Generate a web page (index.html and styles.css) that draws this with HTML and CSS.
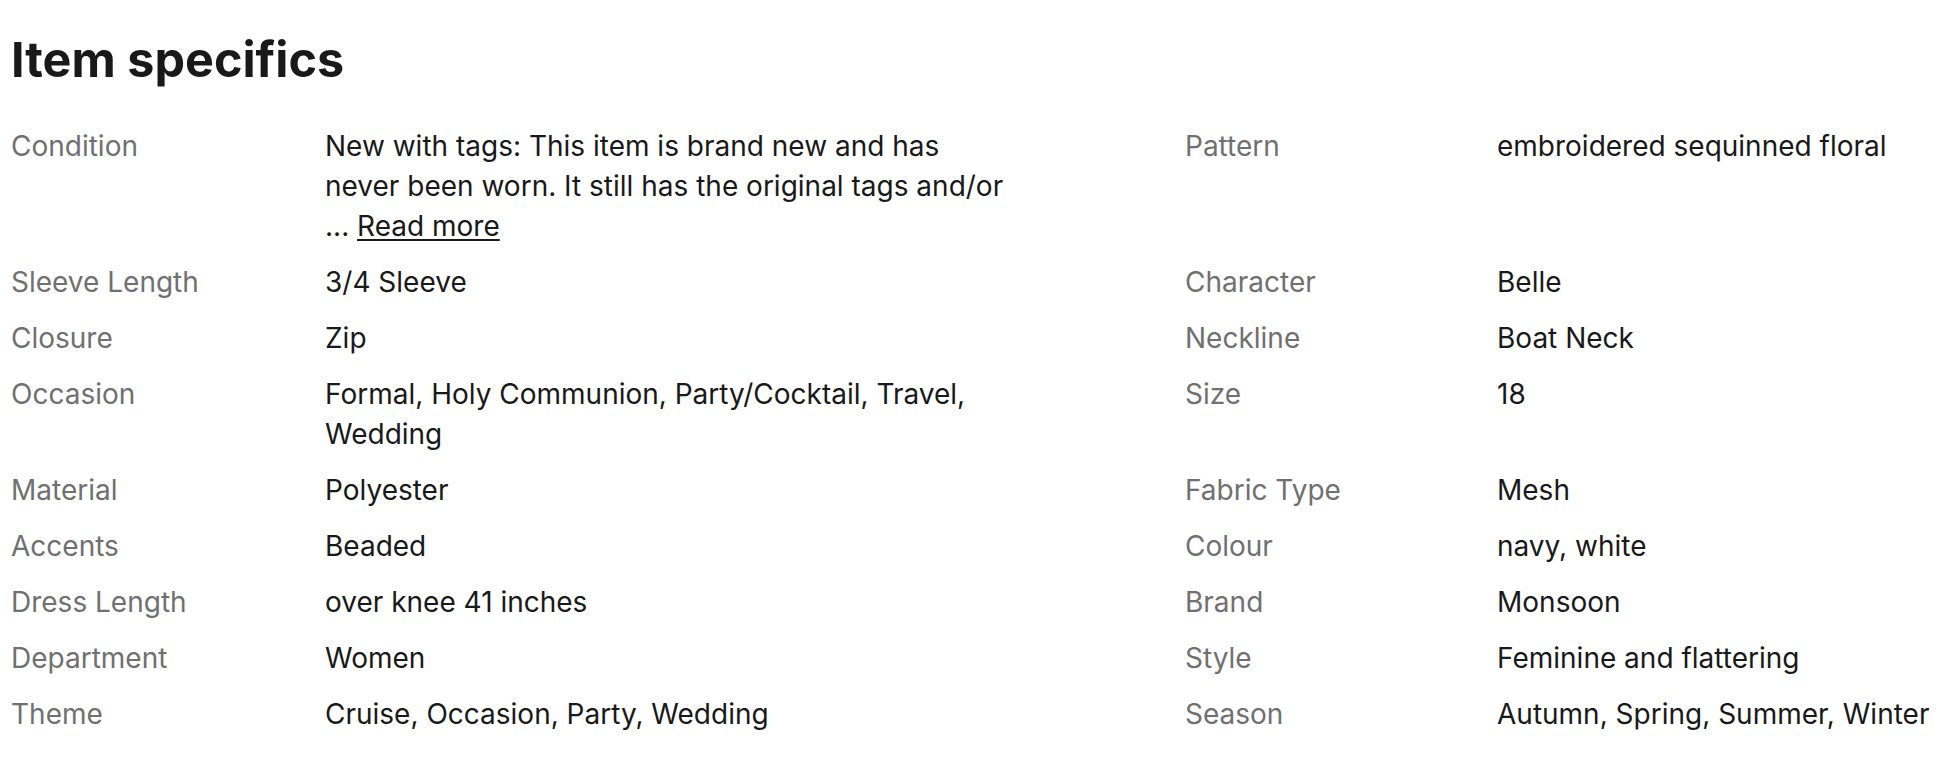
FILE: index.html
```html
<!DOCTYPE html>
<html lang="en">
<head>
<meta charset="utf-8">
<title>Item specifics</title>
<link rel="stylesheet" href="styles.css">
</head>
<body>
<section class="specs">
  <h2 class="specs-title">Item specifics</h2>
  <div class="specs-rows">
    <div class="row">
      <div class="col col-left">
        <div class="label">Condition</div>
        <div class="value">New with tags: This item is brand new and has never been worn. It still has the original tags and/or ... <a class="more" href="#">Read more</a></div>
      </div>
      <div class="col col-right">
        <div class="label">Pattern</div>
        <div class="value">embroidered sequinned floral</div>
      </div>
    </div>
    <div class="row">
      <div class="col col-left"><div class="label">Sleeve Length</div><div class="value">3/4 Sleeve</div></div>
      <div class="col col-right"><div class="label">Character</div><div class="value">Belle</div></div>
    </div>
    <div class="row">
      <div class="col col-left"><div class="label">Closure</div><div class="value">Zip</div></div>
      <div class="col col-right"><div class="label">Neckline</div><div class="value">Boat Neck</div></div>
    </div>
    <div class="row">
      <div class="col col-left"><div class="label">Occasion</div><div class="value">Formal, Holy Communion, Party/Cocktail, Travel, Wedding</div></div>
      <div class="col col-right"><div class="label">Size</div><div class="value">18</div></div>
    </div>
    <div class="row">
      <div class="col col-left"><div class="label">Material</div><div class="value">Polyester</div></div>
      <div class="col col-right"><div class="label">Fabric Type</div><div class="value">Mesh</div></div>
    </div>
    <div class="row">
      <div class="col col-left"><div class="label">Accents</div><div class="value">Beaded</div></div>
      <div class="col col-right"><div class="label">Colour</div><div class="value">navy, white</div></div>
    </div>
    <div class="row">
      <div class="col col-left"><div class="label">Dress Length</div><div class="value">over knee 41 inches</div></div>
      <div class="col col-right"><div class="label">Brand</div><div class="value">Monsoon</div></div>
    </div>
    <div class="row">
      <div class="col col-left"><div class="label">Department</div><div class="value">Women</div></div>
      <div class="col col-right"><div class="label">Style</div><div class="value">Feminine and flattering</div></div>
    </div>
    <div class="row">
      <div class="col col-left"><div class="label">Theme</div><div class="value">Cruise, Occasion, Party, Wedding</div></div>
      <div class="col col-right"><div class="label">Season</div><div class="value">Autumn, Spring, Summer, Winter</div></div>
    </div>
  </div>
</section>
</body>
</html>
```

FILE: styles.css
```css
html, body {
  margin: 0;
  padding: 0;
  background: #ffffff;
}

body {
  font-family: Inter, "Liberation Sans", Arial, sans-serif;
  color: #191919;
}

.specs {
  padding: 28px 11px 0 11px;
}

.specs-title {
  margin: 0 0 34px 0;
  font-size: 48.5px;
  line-height: 64px;
  font-weight: 700;
  color: #191919;
}

.specs-rows {
  display: flex;
  flex-direction: column;
  gap: 16px;
}

.row {
  display: flex;
}

.col {
  display: flex;
  font-size: 28px;
  line-height: 40px;
}

.col-left {
  width: 1174px;
  flex: none;
}

.col-right {
  flex: 1;
}

.label {
  flex: none;
  width: 314px;
  color: #707070;
}

.col-right .label {
  width: 312px;
}

.col-left .value {
  width: 682px;
}

.value {
  color: #191919;
}

.more {
  color: #191919;
  text-decoration: underline;
  text-underline-offset: 3px;
}
```
